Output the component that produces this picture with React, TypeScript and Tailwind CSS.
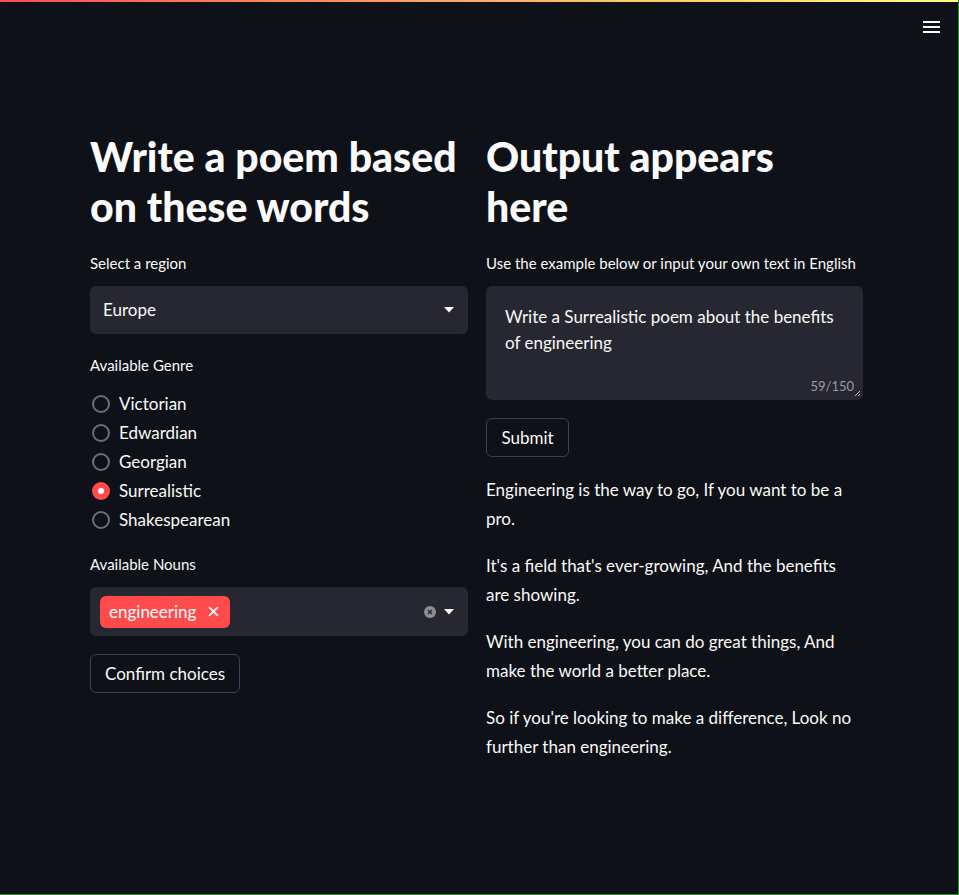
import React from "react";

const font = { fontFamily: '"Lato", "Liberation Sans", sans-serif' };

const Caret = () => (
  <svg width="10" height="6" viewBox="0 0 10 6" className="fill-[#fafafa]">
    <path d="M0 0h10L5 5.5z" />
  </svg>
);

const Radio = ({ label, checked }: { label: string; checked?: boolean }) => (
  <div className="flex h-[29px] items-center">
    {checked ? (
      <span className="ml-[2px] flex h-[18px] w-[18px] items-center justify-center rounded-full bg-[#ff4b4b]">
        <span className="h-[6px] w-[6px] rounded-full bg-white" />
      </span>
    ) : (
      <span className="ml-[2px] h-[18px] w-[18px] rounded-full border-2 border-[#6c6e78]" />
    )}
    <span className="ml-[9px] text-[17px] text-[#fafafa]">{label}</span>
  </div>
);

const Label = ({ children }: { children: React.ReactNode }) => (
  <div className="text-[15px] leading-[21px] text-[#fafafa]">{children}</div>
);

const poem = [
  "Engineering is the way to go, If you want to be a pro.",
  "It's a field that's ever-growing, And the benefits are showing.",
  "With engineering, you can do great things, And make the world a better place.",
  "So if you're looking to make a difference, Look no further than engineering.",
];

export default function App() {
  return (
    <div
      style={font}
      className="relative h-[895px] w-[959px] overflow-hidden border-r border-b border-[#2f8a2f] bg-[#0e1117] text-[#fafafa]"
    >
      <div className="h-[2px] w-full bg-gradient-to-r from-[#ff4b4b] to-[#fffd80]" />
      <div className="absolute right-[18px] top-[21px] flex w-[17px] flex-col gap-[3px]">
        <span className="h-[2px] w-full bg-[#fafafa]" />
        <span className="h-[2px] w-full bg-[#fafafa]" />
        <span className="h-[2px] w-full bg-[#fafafa]" />
      </div>

      <div className="flex gap-[18px] pl-[90px] pt-[130px]">
        {/* left column */}
        <div className="flex w-[378px] flex-col">
          <h1 className="text-[41px] font-black leading-[50px]">
            Write a poem based on these words
          </h1>
          <div className="mt-[21px]">
            <Label>Select a region</Label>
          </div>
          <div className="mt-[12px] flex h-[48px] items-center justify-between rounded-md bg-[#262730] pl-[13px] pr-[14px]">
            <span className="text-[17px]">Europe</span>
            <Caret />
          </div>

          <div className="mt-[21px]">
            <Label>Available Genre</Label>
          </div>
          <div className="mt-[13px] flex flex-col">
            <Radio label="Victorian" />
            <Radio label="Edwardian" />
            <Radio label="Georgian" />
            <Radio label="Surrealistic" checked />
            <Radio label="Shakespearean" />
          </div>

          <div className="mt-[20px]">
            <Label>Available Nouns</Label>
          </div>
          <div className="mt-[12px] flex h-[49px] items-center justify-between rounded-md bg-[#262730] pl-[10px] pr-[14px]">
            <span className="flex h-[32px] items-center gap-[12px] rounded-md bg-[#ff4b4b] pl-[9px] pr-[11px] text-[17px] text-white">
              engineering
              <svg width="11" height="11" viewBox="0 0 10 10" className="stroke-white" strokeWidth="1.6">
                <path d="M1 1l8 8M9 1l-8 8" />
              </svg>
            </span>
            <span className="flex items-center gap-[8px]">
              <svg width="12" height="12" viewBox="0 0 12 12">
                <circle cx="6" cy="6" r="6" fill="#8c8d95" />
                <path d="M4 4l4 4M8 4l-4 4" stroke="#262730" strokeWidth="1.3" />
              </svg>
              <Caret />
            </span>
          </div>

          <button className="mt-[18px] h-[39px] w-[150px] rounded-md border border-[#3d3f49] text-[17px] text-[#fafafa]">
            Confirm choices
          </button>
        </div>

        {/* right column */}
        <div className="flex w-[377px] flex-col">
          <h1 className="text-[41px] font-black leading-[50px]">
            Output appears here
          </h1>
          <div className="mt-[21px]">
            <Label>Use the example below or input your own text in English</Label>
          </div>
          <div className="relative mt-[12px] h-[114px] rounded-md bg-[#262730] px-[19px] pt-[18px]">
            <p className="text-[17px] leading-[26px]">
              Write a Surrealistic poem about the benefits of engineering
            </p>
            <span className="absolute bottom-[4px] right-[9px] text-[13px] text-[#9a9ba3]">59/150</span>
            <svg width="7" height="7" viewBox="0 0 7 7" className="absolute bottom-[3px] right-[2px] stroke-[#bbb]" strokeWidth="1">
              <path d="M6 1L1 6M6 4L4 6" />
            </svg>
          </div>
          <button className="mt-[18px] h-[39px] w-[83px] rounded-md border border-[#3d3f49] text-[17px] text-[#fafafa]">
            Submit
          </button>
          <div className="mt-[18px]">
            {poem.map((p) => (
              <p key={p} className="mb-[18px] text-[17px] leading-[29px]">
                {p}
              </p>
            ))}
          </div>
        </div>
      </div>
    </div>
  );
}
